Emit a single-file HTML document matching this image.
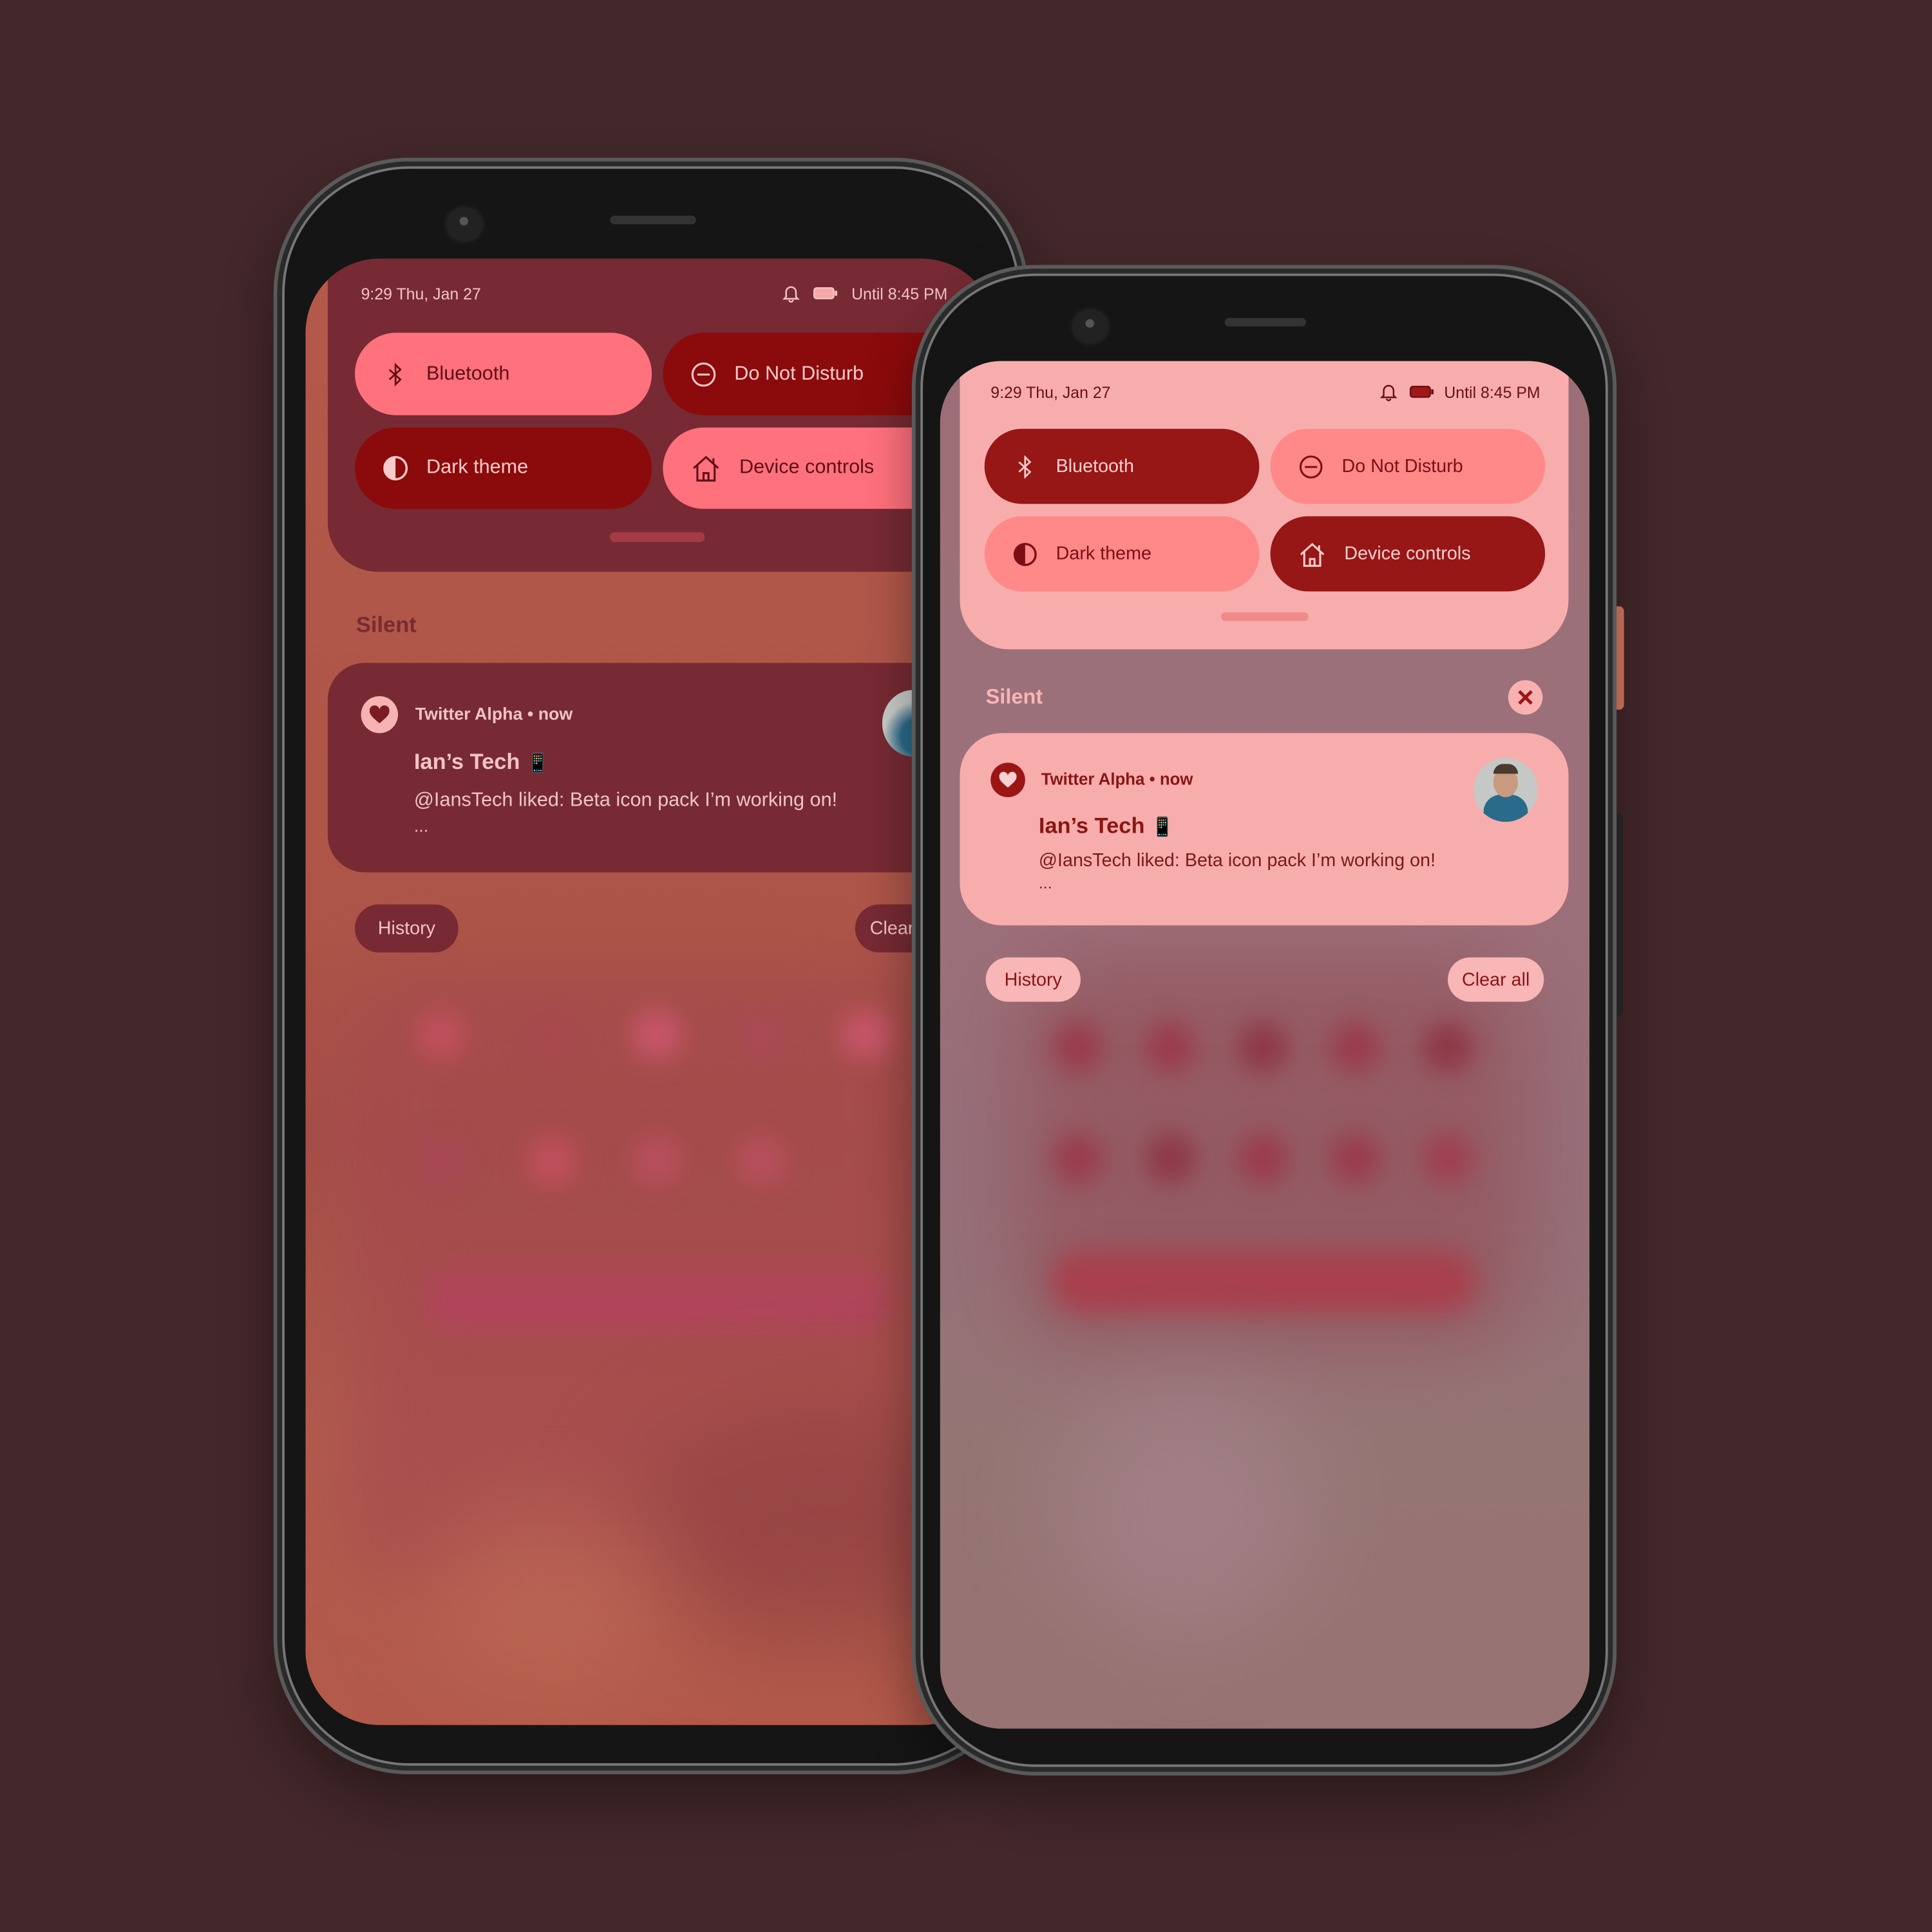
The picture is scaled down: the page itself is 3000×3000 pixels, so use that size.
<!DOCTYPE html>
<html><head><meta charset="utf-8"><style>
html,body{margin:0;padding:0;background:#43272a;overflow:hidden}
#w{position:absolute;left:0;top:0;width:1568px;height:1568px;transform:scale(1.913265);transform-origin:0 0;font-family:"Liberation Sans","Noto Sans CJK JP",sans-serif}
.abs{position:absolute}
.body{position:absolute;background:#151515;border:3px solid #5a5a5a;box-shadow:inset 0 0 0 4px #2a2a2a,inset 0 0 0 6px #777,0 20px 40px rgba(0,0,0,.35)}
.screen{position:absolute;overflow:hidden}
.tile{position:absolute;border-radius:34px;display:flex;align-items:center;font-size:16px}
.tile svg{margin-left:22px;margin-right:14px}
.blob{position:absolute;border-radius:50%;filter:blur(10px)}
.pill{position:absolute;border-radius:20px;font-size:15px;display:flex;align-items:center;justify-content:center}
</style></head><body><div id="w">

<!-- LEFT PHONE -->
<div class="body" style="left:222px;top:128px;width:607px;height:1306px;border-radius:110px"></div>
<div class="abs" style="left:362px;top:168px;width:30px;height:28px;border-radius:50%;background:#222;box-shadow:0 0 0 2px #1a1a1a"></div>
<div class="abs" style="left:373px;top:176px;width:7px;height:7px;border-radius:50%;background:#555"></div>
<div class="abs" style="left:495px;top:175px;width:70px;height:7px;border-radius:4px;background:#333"></div>
<div class="screen" style="left:248px;top:210px;width:560px;height:1190px;border-radius:60px;background:linear-gradient(180deg,#b4594a 0%,#ad5548 45%,#a54f47 60%,#b25d4e 80%,#b35a4a 100%)">
  <div class="blob" style="left:30px;top:580px;width:480px;height:500px;border-radius:60px;background:#a54a4e;filter:blur(30px);opacity:.7"></div>
  <div class="blob" style="left:90px;top:610px;width:40px;height:40px;background:#c0505e"></div>
  <div class="blob" style="left:180px;top:610px;width:40px;height:40px;background:#a8484f"></div>
  <div class="blob" style="left:265px;top:610px;width:40px;height:40px;background:#c8566a"></div>
  <div class="blob" style="left:350px;top:610px;width:40px;height:40px;background:#ab4a55"></div>
  <div class="blob" style="left:435px;top:610px;width:40px;height:40px;background:#c8566a"></div>
  <div class="blob" style="left:90px;top:712px;width:40px;height:40px;background:#a84855"></div>
  <div class="blob" style="left:180px;top:712px;width:40px;height:40px;background:#c0505e"></div>
  <div class="blob" style="left:265px;top:712px;width:40px;height:40px;background:#b8505e"></div>
  <div class="blob" style="left:350px;top:712px;width:40px;height:40px;background:#b8505e"></div>
  <div class="blob" style="left:95px;top:820px;width:380px;height:50px;border-radius:25px;background:#b0455a"></div>
  <div class="blob" style="left:260px;top:930px;width:320px;height:200px;background:#8e4040;filter:blur(40px);opacity:.6"></div>
  <div class="blob" style="left:100px;top:1010px;width:200px;height:150px;background:#c06c58;filter:blur(40px);opacity:.6"></div>
  <!-- QS -->
  <div class="abs" style="left:18px;top:0;width:560px;height:254px;background:#772a33;border-radius:0 0 40px 40px"></div>
  <div class="abs" style="left:45px;top:21px;font-size:13px;color:#f3c4c4">9:29 Thu, Jan 27</div>
  <svg class="abs" style="left:387px;top:20px" width="14" height="16" viewBox="0 0 14 16"><path d="M3 11V7a4 4 0 0 1 8 0v4l1.5 1.5h-11z M5.5 13.5a1.5 1.5 0 0 0 3 0" fill="none" stroke="#f3c4c4" stroke-width="1.3"/></svg>
  <svg class="abs" style="left:412px;top:23px" width="20" height="10"><rect x=".7" y=".7" width="16" height="8.6" rx="2" fill="#f7a7a7" stroke="#f3c4c4" stroke-width="1.2"/><rect x="17.5" y="3" width="2" height="4" fill="#f3c4c4"/></svg>
  <div class="abs" style="left:443px;top:21px;font-size:13px;color:#f3c4c4;white-space:nowrap">Until 8:45 PM</div>
  <div class="tile" style="left:40px;top:60px;width:241px;height:67px;background:#ff717d;color:#5e0f14"><svg width="22" height="22" viewBox="0 0 22 22"><path d="M6 7l9 8-4 4V3l4 4-9 8" fill="none" stroke="#5e0f14" stroke-width="1.4"/></svg>Bluetooth</div>
  <div class="tile" style="left:290px;top:60px;width:290px;height:67px;background:#8b0a0b;color:#fbcaca"><svg width="22" height="22" viewBox="0 0 22 22"><circle cx="11" cy="11" r="9" fill="none" stroke="#fbcaca" stroke-width="1.6"/><path d="M6 11h10" stroke="#fbcaca" stroke-width="1.6"/></svg>Do Not Disturb</div>
  <div class="tile" style="left:40px;top:137px;width:241px;height:66px;background:#8b0a0b;color:#fbcaca"><svg width="22" height="22" viewBox="0 0 22 22"><circle cx="11" cy="11" r="9" fill="none" stroke="#fbcaca" stroke-width="1.8"/><path d="M11 2a9 9 0 0 0 0 18z" fill="#fbcaca"/></svg>Dark theme</div>
  <div class="tile" style="left:290px;top:137px;width:290px;height:66px;background:#ff717d;color:#5e0f14"><svg width="26" height="26" viewBox="0 0 26 26"><path d="M3 13L13 4l10 9M6 11v12h14V11M11 23v-6h4v6M19 5v4" fill="none" stroke="#5e0f14" stroke-width="1.6"/></svg>Device controls</div>
  <div class="abs" style="left:247px;top:222px;width:77px;height:8px;border-radius:4px;background:#a53b47"></div>
  <div class="abs" style="left:41px;top:287px;font-size:18px;font-weight:bold;color:#7a2a33">Silent</div>
  <div class="abs" style="left:18px;top:328px;width:560px;height:170px;background:#772a33;border-radius:30px"></div>
  <div class="abs" style="left:45px;top:355px;width:30px;height:30px;border-radius:50%;background:#f7b3b3"></div>
  <svg class="abs" style="left:51px;top:362px" width="18" height="16" viewBox="0 0 18 16"><path d="M9 15C3 10 1 8 1 5a4 4 0 0 1 8-1 4 4 0 0 1 8 1c0 3-2 5-8 10z" fill="#7a1a22"/></svg>
  <div class="abs" style="left:89px;top:361px;font-size:14px;font-weight:bold;color:#f0c4c4">Twitter Alpha • now</div>
  <div class="abs" style="left:468px;top:350px;width:50px;height:54px;border-radius:50%;background:radial-gradient(circle at 60% 70%,#2a6a8a 30%,#c8ccc8 60%)"></div>
  <div class="abs" style="left:88px;top:398px;font-size:18px;font-weight:bold;color:#f3c4c4">Ian’s Tech <span style="font-size:15px">📱</span></div>
  <div class="abs" style="left:88px;top:431px;font-size:16px;color:#f0c4c4;white-space:nowrap">@IansTech liked: Beta icon pack I’m working on!</div>
  <div class="abs" style="left:88px;top:452px;font-size:14px;color:#f0c4c4">...</div>
  <div class="pill" style="left:40px;top:524px;width:84px;height:39px;background:#772a33;color:#f3c4c4">History</div>
  <div class="pill" style="left:446px;top:524px;width:90px;height:39px;background:#772a33;color:#f3c4c4;justify-content:flex-start;padding-left:12px;box-sizing:border-box">Clear all</div>
</div>

<!-- RIGHT PHONE -->
<div class="abs" style="left:1309px;top:492px;width:9px;height:84px;border-radius:4px;background:#d97a60"></div>
<div class="abs" style="left:1309px;top:660px;width:8px;height:165px;border-radius:4px;background:#2a2a2a"></div>
<div class="body" style="left:740px;top:215px;width:566px;height:1220px;border-radius:100px"></div>
<div class="abs" style="left:870px;top:251px;width:30px;height:28px;border-radius:50%;background:#222;box-shadow:0 0 0 2px #1a1a1a"></div>
<div class="abs" style="left:881px;top:259px;width:7px;height:7px;border-radius:50%;background:#555"></div>
<div class="abs" style="left:994px;top:258px;width:66px;height:7px;border-radius:4px;background:#333"></div>
<div class="screen" style="left:763px;top:293px;width:527px;height:1110px;border-radius:50px;background:linear-gradient(180deg,#9c6f78 0%,#9c707a 40%,#96707a 60%,#957574 80%,#977373 100%)">
  <div class="blob" style="left:60px;top:480px;width:420px;height:320px;border-radius:60px;background:#94535c;filter:blur(30px);opacity:.7"></div>
  <div class="blob" style="left:92px;top:537px;width:40px;height:40px;background:#9a3a4a"></div>
  <div class="blob" style="left:167px;top:537px;width:40px;height:40px;background:#9a3a4a"></div>
  <div class="blob" style="left:242px;top:537px;width:40px;height:40px;background:#8e3646"></div>
  <div class="blob" style="left:317px;top:537px;width:40px;height:40px;background:#9a3a4a"></div>
  <div class="blob" style="left:392px;top:537px;width:40px;height:40px;background:#8e3646"></div>
  <div class="blob" style="left:92px;top:627px;width:40px;height:40px;background:#9a3a4a"></div>
  <div class="blob" style="left:167px;top:627px;width:40px;height:40px;background:#8e3646"></div>
  <div class="blob" style="left:242px;top:627px;width:40px;height:40px;background:#9a3a4a"></div>
  <div class="blob" style="left:317px;top:627px;width:40px;height:40px;background:#9a3a4a"></div>
  <div class="blob" style="left:392px;top:627px;width:40px;height:40px;background:#a03e4e"></div>
  <div class="blob" style="left:90px;top:722px;width:345px;height:50px;border-radius:25px;background:#a8404e"></div>
  <div class="blob" style="left:100px;top:830px;width:200px;height:200px;background:#a88590;filter:blur(40px);opacity:.6"></div>
  <!-- QS -->
  <div class="abs" style="left:16px;top:0;width:494px;height:234px;background:#f8adad;border-radius:0 0 40px 40px"></div>
  <div class="abs" style="left:41px;top:18px;font-size:13px;color:#6a1015">9:29 Thu, Jan 27</div>
  <svg class="abs" style="left:357px;top:17px" width="14" height="16" viewBox="0 0 14 16"><path d="M3 11V7a4 4 0 0 1 8 0v4l1.5 1.5h-11z M5.5 13.5a1.5 1.5 0 0 0 3 0" fill="none" stroke="#6a1015" stroke-width="1.3"/></svg>
  <svg class="abs" style="left:381px;top:20px" width="20" height="10"><rect x=".7" y=".7" width="16" height="8.6" rx="2" fill="#a01818" stroke="#6a1015" stroke-width="1.2"/><rect x="17.5" y="3" width="2" height="4" fill="#6a1015"/></svg>
  <div class="abs" style="left:409px;top:18px;font-size:13px;color:#6a1015;white-space:nowrap">Until 8:45 PM</div>
  <div class="tile" style="left:36px;top:55px;width:223px;height:61px;background:#971616;color:#fbd0d0;font-size:15px"><svg width="22" height="22" viewBox="0 0 22 22"><path d="M6 7l9 8-4 4V3l4 4-9 8" fill="none" stroke="#fbd0d0" stroke-width="1.4"/></svg>Bluetooth</div>
  <div class="tile" style="left:268px;top:55px;width:223px;height:61px;background:#ff8888;color:#7a1015;font-size:15px"><svg width="22" height="22" viewBox="0 0 22 22"><circle cx="11" cy="11" r="8.5" fill="none" stroke="#7a1015" stroke-width="1.6"/><path d="M6 11h10" stroke="#7a1015" stroke-width="1.6"/></svg>Do Not Disturb</div>
  <div class="tile" style="left:36px;top:126px;width:223px;height:61px;background:#ff8888;color:#7a1015;font-size:15px"><svg width="22" height="22" viewBox="0 0 22 22"><circle cx="11" cy="11" r="8.5" fill="none" stroke="#7a1015" stroke-width="1.8"/><path d="M11 2.5a8.5 8.5 0 0 0 0 17z" fill="#7a1015"/></svg>Dark theme</div>
  <div class="tile" style="left:268px;top:126px;width:223px;height:61px;background:#971616;color:#fbd0d0;font-size:15px"><svg width="24" height="24" viewBox="0 0 26 26"><path d="M3 13L13 4l10 9M6 11v12h14V11M11 23v-6h4v6M19 5v4" fill="none" stroke="#fbd0d0" stroke-width="1.7"/></svg>Device controls</div>
  <div class="abs" style="left:228px;top:204px;width:71px;height:7px;border-radius:4px;background:#f08a8a"></div>
  <div class="abs" style="left:37px;top:263px;font-size:17px;font-weight:bold;color:#f9b6b6">Silent</div>
  <div class="abs" style="left:461px;top:259px;width:28px;height:28px;border-radius:50%;background:#f8b0b0"></div>
  <svg class="abs" style="left:468px;top:266px" width="14" height="14"><path d="M2 2l10 10M12 2L2 12" stroke="#9b1515" stroke-width="2.6"/></svg>
  <div class="abs" style="left:16px;top:302px;width:494px;height:156px;background:#f8adad;border-radius:34px"></div>
  <div class="abs" style="left:41px;top:326px;width:28px;height:28px;border-radius:50%;background:#9b1515"></div>
  <svg class="abs" style="left:47px;top:333px" width="16" height="14" viewBox="0 0 18 16"><path d="M9 15C3 10 1 8 1 5a4 4 0 0 1 8-1 4 4 0 0 1 8 1c0 3-2 5-8 10z" fill="#fbd0d0"/></svg>
  <div class="abs" style="left:82px;top:332px;font-size:13.5px;font-weight:bold;color:#8a1515">Twitter Alpha • now</div>
  <div class="abs" style="left:433px;top:322px;width:52px;height:52px;border-radius:50%;overflow:hidden;background:#c5c8c5">
    <div class="abs" style="left:8px;top:30px;width:36px;height:30px;border-radius:14px 14px 0 0;background:#2a6a8a"></div>
    <div class="abs" style="left:16px;top:8px;width:20px;height:24px;border-radius:50%;background:#c89a80"></div>
    <div class="abs" style="left:16px;top:5px;width:20px;height:8px;border-radius:10px 10px 0 0;background:#4a3a30"></div>
  </div>
  <div class="abs" style="left:80px;top:367px;font-size:18px;font-weight:bold;color:#8a1515">Ian’s Tech <span style="font-size:15px">📱</span></div>
  <div class="abs" style="left:80px;top:397px;font-size:15px;color:#7a1a1a;white-space:nowrap">@IansTech liked: Beta icon pack I’m working on!</div>
  <div class="abs" style="left:80px;top:416px;font-size:13px;color:#7a1a1a">...</div>
  <div class="pill" style="left:37px;top:484px;width:77px;height:36px;background:#f8b6b6;color:#8a1515">History</div>
  <div class="pill" style="left:412px;top:484px;width:78px;height:36px;background:#f8b6b6;color:#8a1515">Clear all</div>
</div>
</div></body></html>
